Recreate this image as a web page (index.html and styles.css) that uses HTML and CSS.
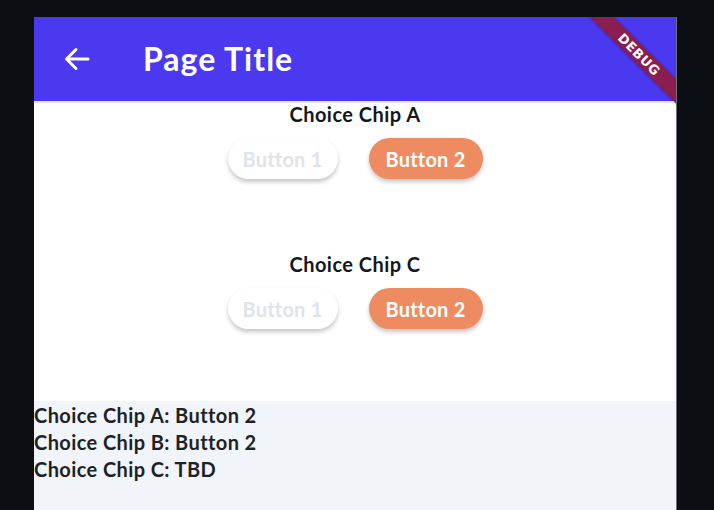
FILE: index.html
```html
<!DOCTYPE html>
<html>
<head>
<meta charset="utf-8">
<link rel="stylesheet" href="styles.css">
</head>
<body>
<div class="frame">
  <header class="appbar">
    <svg class="back" width="26" height="24" viewBox="0 0 26 24" fill="none" stroke="#fff" stroke-width="3" stroke-linecap="round" stroke-linejoin="round">
      <path d="M24 12H3"/>
      <path d="M12 2.5L2.5 12L12 21.5"/>
    </svg>
    <h1 class="title">Page Title</h1>
  </header>
  <main class="content">
    <section class="block">
      <div class="label">Choice Chip A</div>
      <div class="chips">
        <span class="chip">Button 1</span>
        <span class="chip chip-on">Button 2</span>
      </div>
    </section>
    <section class="block">
      <div class="label">Choice Chip C</div>
      <div class="chips">
        <span class="chip">Button 1</span>
        <span class="chip chip-on">Button 2</span>
      </div>
    </section>
  </main>
  <footer class="summary">
    <div class="line">Choice Chip A: Button 2</div>
    <div class="line">Choice Chip B: Button 2</div>
    <div class="line">Choice Chip C: TBD</div>
  </footer>
  <div class="debug">DEBUG</div>
</div>
</body>
</html>
```

FILE: styles.css
```css
html, body {
  margin: 0;
  padding: 0;
  background: #0b0f13;
  height: 100%;
  overflow: hidden;
}
body {
  font-family: "Lato", "Noto Sans", sans-serif;
}
.frame {
  position: relative;
  margin: 17px 0 0 34px;
  width: 642px;
  height: 493px;
  background: #fff;
  overflow: hidden;
  display: flex;
  flex-direction: column;
  border-right: 1px solid #6b7078;
}
.appbar {
  height: 84px;
  flex: none;
  background: #4b39ef;
  display: flex;
  align-items: center;
  padding-left: 30px;
  box-shadow: 0 1px 3px rgba(0,0,0,0.2);
  position: relative;
  z-index: 1;
}
.back {
  display: block;
  flex: none;
}
.title {
  margin: 0 0 0 53px;
  color: #fff;
  font-size: 32px;
  font-weight: 700;
  line-height: 1;
  letter-spacing: 1px;
}
.content {
  display: flex;
  flex-direction: column;
  align-items: center;
}
.block {
  display: flex;
  flex-direction: column;
  align-items: center;
  padding-bottom: 72px;
}
.label {
  font-size: 20px;
  line-height: 26px;
  font-weight: 700;
  letter-spacing: 0.45px;
  color: #14181b;
}
.chips {
  display: flex;
  gap: 31px;
  margin-top: 11px;
}
.chip {
  height: 41px;
  width: 110px;
  box-sizing: border-box;
  border-radius: 21px;
  background: #fff;
  color: #e0e3e7;
  font-size: 20px;
  font-weight: 700;
  letter-spacing: 0.2px;
  display: flex;
  align-items: center;
  justify-content: center;
  white-space: nowrap;
  box-shadow: 0 3px 4px rgba(0,0,0,0.22);
}
.chip-on {
  background: #ee8b60;
  color: #fff;
  width: 114px;
}
.summary {
  flex: 1;
  background: #f1f4f8;
  padding-top: 1px;
}
.line {
  font-size: 20px;
  line-height: 27px;
  font-weight: 700;
  letter-spacing: 0.4px;
  color: #1d2226;
}
.debug {
  position: absolute;
  left: 525px;
  top: 29px;
  width: 160px;
  height: 17px;
  line-height: 17px;
  transform: rotate(45deg);
  background: #8a1e50;
  color: #fff;
  font-family: "DejaVu Sans", sans-serif;
  font-weight: 700;
  font-size: 13px;
  text-align: center;
  letter-spacing: 0.5px;
  z-index: 2;
  box-shadow: 0 0 3px rgba(0,0,0,0.3);
}
```
